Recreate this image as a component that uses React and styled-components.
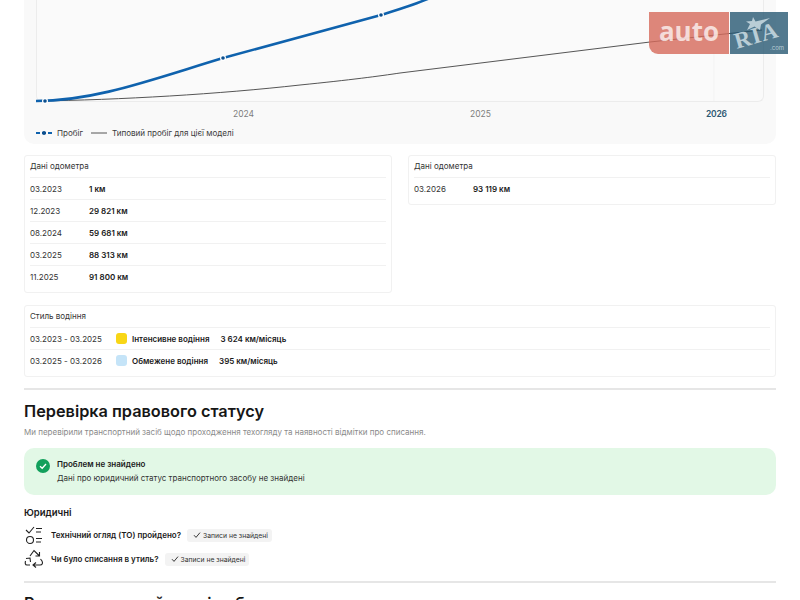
import React from 'react';
import styled, { createGlobalStyle } from 'styled-components';

const Global = createGlobalStyle`
  html, body { margin: 0; padding: 0; background: #fff; }
  body { width: 800px; height: 600px; overflow: hidden; font-family: Inter, "Liberation Sans", sans-serif; color: #1a1a1a; }
  * { box-sizing: border-box; }
`;

const Page = styled.div`
  width: 800px;
  height: 600px;
  overflow: hidden;
  padding: 0 24px;
  position: relative;
`;

const ChartCard = styled.section`
  height: 144px;
  background: #f9f9f9;
  border-radius: 0 0 10px 10px;
  padding: 0 12px;
`;

const Plot = styled.div`
  height: 102px;
  border: 1px solid #ececec;
  border-top: 0;
  border-radius: 0 0 6px 6px;
  background: #fafafa;
  position: relative;
`;

const ChartSvg = styled.svg`
  position: absolute;
  left: -1px;
  top: 0;
  overflow: visible;
`;

const Axis = styled.div`
  position: relative;
  height: 24px;
`;

const Year = styled.span`
  position: absolute;
  top: 5px;
  left: ${p => p.$x}px;
  font-size: 8.5px;
  line-height: 14px;
  font-weight: ${p => (p.$now ? 600 : 400)};
  color: ${p => (p.$now ? '#2d5872' : '#7d7d7d')};
  letter-spacing: ${p => (p.$now ? '-0.2px' : '0')};
`;

const Legend = styled.div`
  display: flex;
  align-items: center;
  font-size: 8.05px;
  line-height: 14px;
  color: #3c3c3c;
`;

const LegendMark = styled.svg`
  margin-right: 5px;
  flex: none;
`;

const LegendItem = styled.span`
  margin-right: 8px;
`;

const Tables = styled.div`
  display: grid;
  grid-template-columns: 368px 368px;
  justify-content: space-between;
  align-items: start;
  margin-top: 11px;
`;

const Card = styled.div`
  border: 1px solid #f1f1f1;
  border-radius: 3px;
  padding: 0 5px 5px;
  background: #fff;
  margin-top: ${p => p.$top || 0}px;
`;

const CardTitle = styled.div`
  height: 21px;
  font-size: 8px;
  line-height: 21px;
  color: #333;
`;

const Row = styled.div`
  display: flex;
  align-items: center;
  height: 22px;
  border-top: 1px solid #f1f1f1;
  font-size: 8px;
  color: #333;
`;

const DateCell = styled.span`
  width: 59px;
  flex: none;
`;

const Value = styled.span`
  font-weight: 600;
  color: #1a1a1a;
`;

const Period = styled.span`
  width: 86px;
  flex: none;
`;

const Swatch = styled.i`
  width: 11px;
  height: 11px;
  border-radius: 3px;
  background: ${p => p.$color};
  margin-right: 5px;
  flex: none;
`;

const Style = styled.span`
  font-weight: 600;
  color: #1a1a1a;
  margin-right: 11px;
`;

const Divider = styled.hr`
  border: 0;
  height: 2px;
  background: #e6e6e6;
  margin: ${p => p.$m};
`;

const Heading = styled.h2`
  margin: ${p => p.$top}px 0 0;
  font-size: 16.3px;
  line-height: 22px;
  font-weight: 600;
  color: #161616;
`;

const Lead = styled.p`
  margin: 3px 0 0;
  font-size: 8px;
  line-height: 14px;
  color: #8a8a8a;
`;

const Notice = styled.div`
  display: flex;
  gap: 7px;
  height: 47px;
  margin-top: 9px;
  padding: 9px 12px;
  border-radius: 10px;
  background: #e2f8e6;
`;

const NoticeIcon = styled.svg`
  margin-top: 2px;
  flex: none;
`;

const NoticeTitle = styled.div`
  font-size: 8px;
  line-height: 14px;
  font-weight: 600;
`;

const NoticeText = styled.div`
  font-size: 8px;
  line-height: 14px;
  color: #333;
`;

const SubHead = styled.h3`
  margin: 11px 0 0;
  font-size: 9.5px;
  line-height: 14px;
  font-weight: 600;
`;

const Check = styled.div`
  display: flex;
  align-items: center;
  height: 24px;
  margin-top: ${p => p.$top}px;
  font-size: 8px;
  font-weight: 600;
`;

const CheckIcon = styled.svg`
  width: 20px;
  height: 20px;
  margin-right: 7px;
  flex: none;
`;

const Tag = styled.span`
  display: inline-flex;
  align-items: center;
  gap: 2px;
  height: 13px;
  margin-left: 6px;
  padding: 0 4px 0 6px;
  border-radius: 3px;
  background: #f3f3f3;
  font-size: 6.8px;
  font-weight: 400;
  color: #333;
`;

const Logo = styled.div`
  position: absolute;
  top: 12px;
  left: 649px;
  width: 139px;
  height: 42px;
  display: flex;
  gap: 1px;
`;

const LogoAuto = styled.div`
  width: 80px;
  background: rgba(214, 105, 90, 0.8);
  border-bottom-left-radius: 9px;
  color: rgba(255, 255, 255, 0.72);
  font-family: "Open Sans", sans-serif;
  font-size: 26px;
  font-weight: 700;
  line-height: 38px;
  text-align: center;
`;

const LogoRia = styled.div`
  width: 58px;
  background: rgba(34, 85, 112, 0.78);
  position: relative;
`;

const RiaText = styled.span`
  position: absolute;
  left: 4px;
  top: 13px;
  font-family: "Liberation Serif", serif;
  font-weight: 700;
  font-size: 23px;
  letter-spacing: 1px;
  line-height: 22px;
  color: #b9cdd6;
  transform: rotate(-16deg);
`;

const RiaCom = styled.span`
  position: absolute;
  right: 4px;
  bottom: 2px;
  font-size: 6px;
  line-height: 9px;
  color: #b9cdd6;
`;

const RiaStar = styled.svg`
  position: absolute;
  left: 16px;
  top: 5px;
`;

const odometerLeft = [
  ['03.2023', '1 км'],
  ['12.2023', '29 821 км'],
  ['08.2024', '59 681 км'],
  ['03.2025', '88 313 км'],
  ['11.2025', '91 800 км'],
];

const points = [[45, 101], [223, 58], [381, 15]];

const Odometer = ({ rows }) => (
  <Card>
    <CardTitle>Дані одометра</CardTitle>
    {rows.map(([date, km]) => (
      <Row key={date}>
        <DateCell>{date}</DateCell>
        <Value>{km}</Value>
      </Row>
    ))}
  </Card>
);

const Tick = () => (
  <svg width="8" height="8" viewBox="0 0 8 8" fill="none" stroke="#222" strokeWidth="0.9">
    <path d="M1 4.2 3 6.4 7 1.6" />
  </svg>
);

export default function App() {
  return (
    <Page>
      <Global />
      <ChartCard>
        <Plot>
          <ChartSvg width="730" height="102" viewBox="36 0 730 102" fill="none">
            <path d="M714 52V101" stroke="#f3f3f3" strokeWidth="1" />
            <path d="M36 101 C120 100 220 94 300 85 C350 80 380 76 400 73 L650 42 L762 30" stroke="#555" strokeWidth="1" />
            <path d="M36 101 C95 101 150 80 223 58 L381 15 C400 9 420 3 432 -3" stroke="#0f62ad" strokeWidth="2.6" />
            {points.map(([x, y]) => (
              <g key={x}>
                <circle cx={x} cy={y} r="3" fill="#fff" />
                <circle cx={x} cy={y} r="1.8" fill="#0c4f8e" />
              </g>
            ))}
          </ChartSvg>
        </Plot>
        <Axis>
          <Year $x={197}>2024</Year>
          <Year $x={434}>2025</Year>
          <Year $x={670} $now>2026</Year>
        </Axis>
        <Legend>
          <LegendMark width="16" height="6" viewBox="0 0 16 6">
            <path d="M0 3H16" stroke="#0f62ad" strokeWidth="2" strokeDasharray="4 2" />
            <circle cx="8" cy="3" r="2" fill="#0c4f8e" />
          </LegendMark>
          <LegendItem>Пробіг</LegendItem>
          <LegendMark width="16" height="6" viewBox="0 0 16 6">
            <path d="M0 3H16" stroke="#555" strokeWidth="1" />
          </LegendMark>
          <span>Типовий пробіг для цієї моделі</span>
        </Legend>
      </ChartCard>

      <Tables>
        <Odometer rows={odometerLeft} />
        <Odometer rows={[['03.2026', '93 119 км']]} />
      </Tables>

      <Card $top={12}>
        <CardTitle>Стиль водіння</CardTitle>
        <Row>
          <Period>03.2023 - 03.2025</Period>
          <Swatch $color="#f8d616" />
          <Style>Інтенсивне водіння</Style>
          <Value>3 624 км/місяць</Value>
        </Row>
        <Row>
          <Period>03.2025 - 03.2026</Period>
          <Swatch $color="#c5e4f8" />
          <Style>Обмежене водіння</Style>
          <Value>395 км/місяць</Value>
        </Row>
      </Card>

      <Divider $m="11px 0 0" />
      <Heading $top={10}>Перевірка правового статусу</Heading>
      <Lead>Ми перевірили транспортний засіб щодо проходження техогляду та наявності відмітки про списання.</Lead>

      <Notice>
        <NoticeIcon width="14" height="14" viewBox="0 0 14 14">
          <circle cx="7" cy="7" r="7" fill="#12a05c" />
          <path d="M4 7.2 6.2 9.3 10 5" fill="none" stroke="#fff" strokeWidth="1.3" />
        </NoticeIcon>
        <div>
          <NoticeTitle>Проблем не знайдено</NoticeTitle>
          <NoticeText>Дані про юридичний статус транспортного засобу не знайдені</NoticeText>
        </div>
      </Notice>

      <SubHead>Юридичні</SubHead>
      <Check $top={3}>
        <CheckIcon viewBox="0 0 20 20" fill="none" stroke="#222" strokeWidth="1.1">
          <path d="M2 5 5 8 10 2M12 3.5H18M12 7H17M12 13.5H18M12 17H17" />
          <circle cx="6" cy="15" r="3.5" />
        </CheckIcon>
        Технічний огляд (ТО) пройдено?
        <Tag><Tick />Записи не знайдені</Tag>
      </Check>
      <Check $top={0}>
        <CheckIcon viewBox="0 0 20 20" fill="none" stroke="#222" strokeWidth="1.1">
          <path d="M6 7 10 1.5 15 6.5M15.5 3 15.5 7 11.5 7M2 9.5 6 9 6.5 13M1.5 12C1 14 1 16 3 16H6M12 18.5 9 16 12 13.5M9.5 16H16C18.5 16 19 14 18 12L16.5 10" />
        </CheckIcon>
        Чи було списання в утиль?
        <Tag><Tick />Записи не знайдені</Tag>
      </Check>

      <Divider $m="10px 0 0" />
      <Heading $top={9}>Рекомендований сервіс обслуговування</Heading>

      <Logo>
        <LogoAuto>auto</LogoAuto>
        <LogoRia>
          <RiaStar width="26" height="14" viewBox="0 0 26 14">
            <path d="M7 0 9.5 4.5 24 1 15 7.5 14 13 8.5 9.5 1 13 4 7 0 4.5 6 4Z" fill="#b9cdd6" />
          </RiaStar>
          <RiaText>RIA</RiaText>
          <RiaCom>.com</RiaCom>
        </LogoRia>
      </Logo>
    </Page>
  );
}
